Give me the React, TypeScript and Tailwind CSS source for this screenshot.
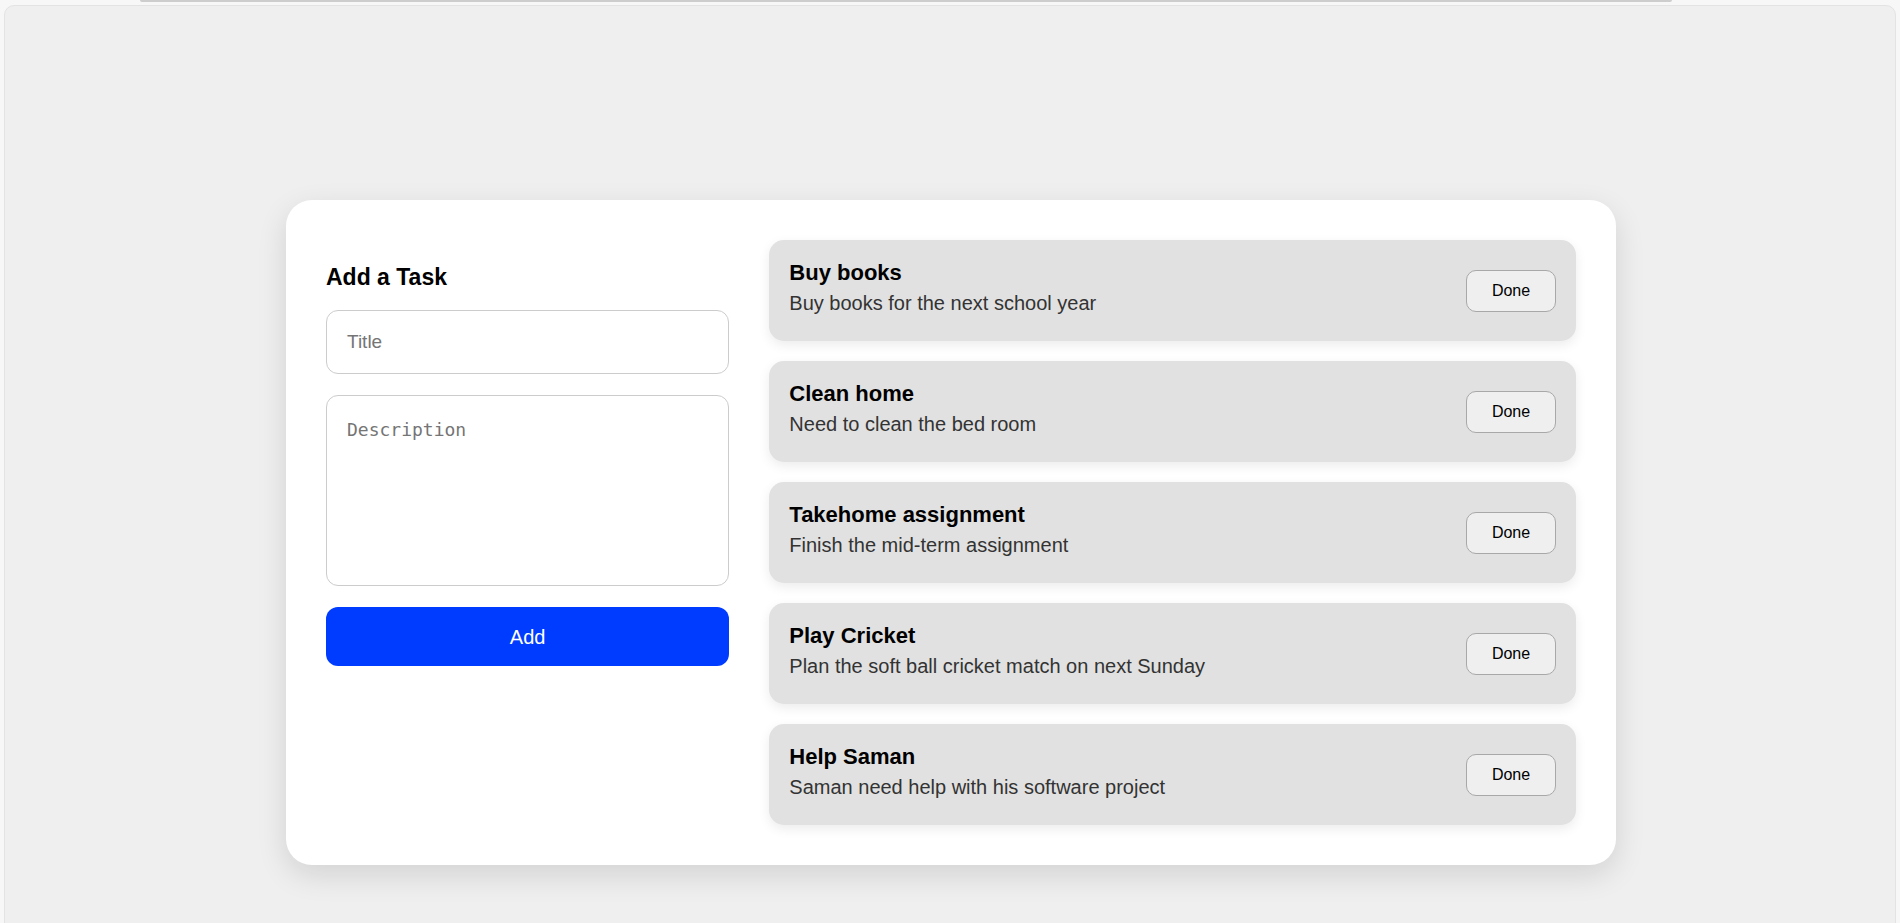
import { FC } from 'react'

const tasks = [
  { title: 'Buy books', description: 'Buy books for the next school year' },
  { title: 'Clean home', description: 'Need to clean the bed room' },
  { title: 'Takehome assignment', description: 'Finish the mid-term assignment' },
  { title: 'Play Cricket', description: 'Plan the soft ball cricket match on next Sunday' },
  { title: 'Help Saman', description: 'Saman need help with his software project' },
]

const App: FC = () => {
  return (
    <div className="h-[923px] overflow-hidden bg-[#f7f7f7] font-['Liberation_Sans',Arial,sans-serif]">
      <div className="h-[5px] pl-[140px]">
        <div className="h-[2px] w-[1532px] rounded-b bg-[#cdcdcd]"></div>
      </div>
      <div className="ml-[4px] mr-[4px] h-[960px] rounded-t-[10px] border border-[#e3e3e3] bg-[#efefef] pt-[194px]">
        <div className="ml-[281px] grid w-[1330px] grid-cols-[1fr_2fr] gap-10 rounded-[26px] bg-white p-10 shadow-[0_10px_30px_rgba(0,0,0,0.12)]">
          <div className="flex flex-col">
            <h2 className="mt-[24px] mb-[20px] text-[23px] leading-[26px] font-bold text-black">Add a Task</h2>
            <input
              type="text"
              placeholder="Title"
              className="h-[64px] rounded-[12px] border border-[#cccccc] px-5 text-[19px] outline-none placeholder:text-[#757575]"
            />
            <textarea
              placeholder="Description"
              className="mt-[21px] h-[191px] resize-none rounded-[12px] border border-[#cccccc] px-5 pt-[20px] font-['DejaVu_Sans_Mono',monospace] text-[18px] outline-none placeholder:text-[#757575]"
            ></textarea>
            <button className="mt-[21px] h-[59px] rounded-[12px] bg-[#003cff] text-[20px] text-white">Add</button>
          </div>
          <div className="flex flex-col gap-5">
            {tasks.map((task) => (
              <div
                key={task.title}
                className="flex h-[101px] items-center justify-between rounded-[15px] bg-[#e1e1e1] px-5 shadow-[0_4px_12px_rgba(0,0,0,0.08)]"
              >
                <div className="self-start pt-[20px]">
                  <div className="text-[22px] leading-[25px] font-bold text-black">{task.title}</div>
                  <div className="mt-[7px] text-[20px] leading-[23px] text-[#333333]">{task.description}</div>
                </div>
                <button className="h-[42px] w-[90px] rounded-[10px] border border-[#a8a8a8] bg-[#efefef] text-[16px] text-black">
                  Done
                </button>
              </div>
            ))}
          </div>
        </div>
      </div>
    </div>
  )
}

export default App
